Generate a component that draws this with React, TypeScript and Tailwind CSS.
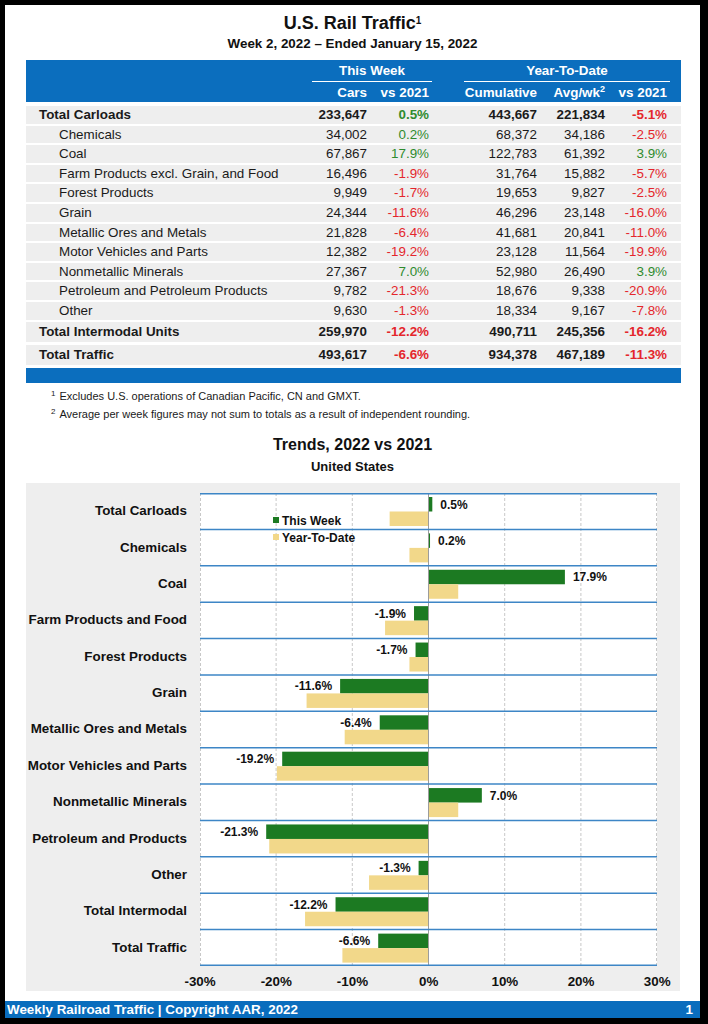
import React from 'react';

type Row = {
  name: string;
  bold?: boolean;
  cars: string;
  vs: string;
  cum: string;
  avg: string;
  ytd: string;
};

const ROWS: Row[] = [
  { name: 'Total Carloads', bold: true, cars: '233,647', vs: '0.5%', cum: '443,667', avg: '221,834', ytd: '-5.1%' },
  { name: 'Chemicals', cars: '34,002', vs: '0.2%', cum: '68,372', avg: '34,186', ytd: '-2.5%' },
  { name: 'Coal', cars: '67,867', vs: '17.9%', cum: '122,783', avg: '61,392', ytd: '3.9%' },
  { name: 'Farm Products excl. Grain, and Food', cars: '16,496', vs: '-1.9%', cum: '31,764', avg: '15,882', ytd: '-5.7%' },
  { name: 'Forest Products', cars: '9,949', vs: '-1.7%', cum: '19,653', avg: '9,827', ytd: '-2.5%' },
  { name: 'Grain', cars: '24,344', vs: '-11.6%', cum: '46,296', avg: '23,148', ytd: '-16.0%' },
  { name: 'Metallic Ores and Metals', cars: '21,828', vs: '-6.4%', cum: '41,681', avg: '20,841', ytd: '-11.0%' },
  { name: 'Motor Vehicles and Parts', cars: '12,382', vs: '-19.2%', cum: '23,128', avg: '11,564', ytd: '-19.9%' },
  { name: 'Nonmetallic Minerals', cars: '27,367', vs: '7.0%', cum: '52,980', avg: '26,490', ytd: '3.9%' },
  { name: 'Petroleum and Petroleum Products', cars: '9,782', vs: '-21.3%', cum: '18,676', avg: '9,338', ytd: '-20.9%' },
  { name: 'Other', cars: '9,630', vs: '-1.3%', cum: '18,334', avg: '9,167', ytd: '-7.8%' },
];

const TOTALS: Row[] = [
  { name: 'Total Intermodal Units', bold: true, cars: '259,970', vs: '-12.2%', cum: '490,711', avg: '245,356', ytd: '-16.2%' },
  { name: 'Total Traffic', bold: true, cars: '493,617', vs: '-6.6%', cum: '934,378', avg: '467,189', ytd: '-11.3%' },
];

const TRENDS = [
  { label: 'Total Carloads', week: 0.5, ytd: -5.1 },
  { label: 'Chemicals', week: 0.2, ytd: -2.5 },
  { label: 'Coal', week: 17.9, ytd: 3.9 },
  { label: 'Farm Products and Food', week: -1.9, ytd: -5.7 },
  { label: 'Forest Products', week: -1.7, ytd: -2.5 },
  { label: 'Grain', week: -11.6, ytd: -16.0 },
  { label: 'Metallic Ores and Metals', week: -6.4, ytd: -11.0 },
  { label: 'Motor Vehicles and Parts', week: -19.2, ytd: -19.9 },
  { label: 'Nonmetallic Minerals', week: 7.0, ytd: 3.9 },
  { label: 'Petroleum and Products', week: -21.3, ytd: -20.9 },
  { label: 'Other', week: -1.3, ytd: -7.8 },
  { label: 'Total Intermodal', week: -12.2, ytd: -16.2 },
  { label: 'Total Traffic', week: -6.6, ytd: -11.3 },
];

const pctColor = (v: string) => (v.startsWith('-') ? 'text-[#e4262c]' : 'text-[#2e8b2e]');

const W = 457;
const H = 473;
const ZERO = 228.5;
const SCALE = 7.62;
const PITCH = H / TRENDS.length;

const DataRow = ({ r, tall }: { r: Row; tall?: boolean }) => (
  <div
    className={`grid grid-cols-[283px_58px_62px_108px_68px_62px] pr-[14px] bg-[#eeeeee] text-[13.4px] text-[#1a1a1a] whitespace-nowrap ${
      tall ? 'h-[20.5px] leading-[20.5px]' : 'h-[17.6px] leading-[17.6px]'
    } ${r.bold ? 'font-bold' : ''}`}
  >
    <div className={r.bold ? 'pl-[13px]' : 'pl-[33px]'}>{r.name}</div>
    <div className="text-right">{r.cars}</div>
    <div className={`text-right ${pctColor(r.vs)}`}>{r.vs}</div>
    <div className="text-right">{r.cum}</div>
    <div className="text-right">{r.avg}</div>
    <div className={`text-right ${pctColor(r.ytd)}`}>{r.ytd}</div>
  </div>
);

const TrendChart = () => (
  <svg width={W} height={H} className="block shrink-0 overflow-visible">
    <rect x={0} y={0} width={W} height={H} fill="#ffffff" />
    {[-30, -20, -10, 10, 20, 30].map((v) => {
      const x = Math.min(Math.max(ZERO + v * SCALE, 0.5), W - 0.5);
      return <line key={v} x1={x} x2={x} y1={0} y2={H} stroke="#c8c8c8" strokeWidth={1} strokeDasharray="3 2" />;
    })}
    {TRENDS.map((t, i) => {
      const top = i * PITCH;
      const wx = t.week >= 0 ? ZERO : ZERO + t.week * SCALE;
      const yx = t.ytd >= 0 ? ZERO : ZERO + t.ytd * SCALE;
      const label = `${t.week.toFixed(1)}%`;
      const end = ZERO + t.week * SCALE;
      return (
        <g key={t.label}>
          <rect x={wx} y={top + 4} width={Math.abs(t.week) * SCALE} height={14.5} fill="#1c7a22" />
          <rect x={yx} y={top + 18.5} width={Math.abs(t.ytd) * SCALE} height={14.5} fill="#f2d88a" />
          <text
            x={t.week >= 0 ? end + 8 : end - 8}
            y={top + 15.5}
            textAnchor={t.week >= 0 ? 'start' : 'end'}
            fontSize={12}
            fontWeight={700}
            fill="#111111"
          >
            {label}
          </text>
        </g>
      );
    })}
    <line x1={ZERO} x2={ZERO} y1={0} y2={H} stroke="#9c9c9c" strokeWidth={1} />
    {Array.from({ length: TRENDS.length + 1 }).map((_, i) => {
      const y = Math.min(Math.max(i * PITCH, 0.75), H - 0.75);
      return <line key={i} x1={0} x2={W} y1={y} y2={y} stroke="#3d86c6" strokeWidth={1.5} />;
    })}
    <rect x={73} y={24} width={6} height={6} fill="#1c7a22" />
    <text x={82} y={31.5} fontSize={12} fontWeight={700} fill="#111111">
      This Week
    </text>
    <rect x={73} y={41} width={6} height={6} fill="#f2d88a" />
    <text x={82} y={48.5} fontSize={12} fontWeight={700} fill="#111111">
      Year-To-Date
    </text>
  </svg>
);

const App: React.FC = () => {
  return (
    <div className="w-[708px] h-[1024px] bg-black pt-[5px] pl-[5px] pr-[8px] font-['Liberation_Sans',Arial,sans-serif] text-[#111111]">
      <div className="h-[996px] bg-white flex flex-col">
        {/* header */}
        <div className="pt-[8px] text-center text-[18px] leading-[21px] font-bold">
          U.S. Rail Traffic<sup className="text-[10px]">1</sup>
        </div>
        <div className="mt-[2px] text-center text-[13.4px] leading-[16px] font-bold">
          Week 2, 2022 – Ended January 15, 2022
        </div>

        {/* table */}
        <div className="ml-[21px] w-[655px] mt-[8px]">
          <div className="bg-[#0b6ebe] text-white font-bold text-[13.4px] h-[42px] pt-[3px]">
            <div className="grid grid-cols-[283px_58px_62px_108px_68px_62px] pr-[14px]">
              <div />
              <div className="col-span-2 ml-[3px] mr-[-3px] text-center leading-[16px] pb-[1.5px] border-b-[1.5px] border-white">
                This Week
              </div>
              <div className="col-span-3 ml-[35px] mr-[-3px] text-center leading-[16px] pb-[1.5px] border-b-[1.5px] border-white">
                Year-To-Date
              </div>
            </div>
            <div className="grid grid-cols-[283px_58px_62px_108px_68px_62px] pr-[14px] mt-[3px] leading-[16px] whitespace-nowrap">
              <div />
              <div className="text-right">Cars</div>
              <div className="text-right">vs 2021</div>
              <div className="text-right">Cumulative</div>
              <div className="text-right">
                Avg/wk<sup className="text-[9px]">2</sup>
              </div>
              <div className="text-right">vs 2021</div>
            </div>
          </div>
          <div className="mt-[4px] flex flex-col gap-[2px]">
            {ROWS.map((r) => (
              <DataRow key={r.name} r={r} />
            ))}
          </div>
          <div className="mt-[2px] flex flex-col gap-[2.5px]">
            {TOTALS.map((r) => (
              <DataRow key={r.name} r={r} tall />
            ))}
          </div>
          <div className="mt-[3px] h-[15px] bg-[#0b6ebe]" />
        </div>

        {/* footnotes */}
        <div className="mt-[4px] pl-[46px] text-[11px] leading-[18px] text-[#1a1a1a]">
          <div>
            <sup className="text-[8px] mr-[4px]">1</sup>Excludes U.S. operations of Canadian Pacific, CN and GMXT.
          </div>
          <div>
            <sup className="text-[8px] mr-[4px]">2</sup>Average per week figures may not sum to totals as a result of independent rounding.
          </div>
        </div>

        {/* chart */}
        <div className="mt-[12px] text-center text-[16px] leading-[20px] font-bold">Trends, 2022 vs 2021</div>
        <div className="mt-[4px] text-center text-[13px] leading-[16px] font-bold">United States</div>
        <div className="mt-[8px] ml-[21px] w-[654px] h-[508px] bg-[#eeeeee] pt-[10px]">
          <div className="flex">
            <div className="w-[174px] pr-[13px] flex flex-col">
              {TRENDS.map((t) => (
                <div
                  key={t.label}
                  className="h-[36.385px] flex items-center justify-end text-[13.4px] font-bold text-[#111111] whitespace-nowrap"
                >
                  {t.label}
                </div>
              ))}
            </div>
            <TrendChart />
          </div>
          <div className="mt-[8px] ml-[136px] grid grid-cols-[repeat(7,76.2px)] text-[13.4px] leading-[16px] font-bold">
            {['-30%', '-20%', '-10%', '0%', '10%', '20%', '30%'].map((l) => (
              <div key={l} className="text-center">
                {l}
              </div>
            ))}
          </div>
        </div>
      </div>

      {/* footer */}
      <div className="h-[17px] bg-[#0a6dbd] text-white font-bold text-[13.4px] leading-[17px] flex justify-between pl-[2px] pr-[7px]">
        <span>Weekly Railroad Traffic | Copyright AAR, 2022</span>
        <span>1</span>
      </div>
    </div>
  );
};

export default App;
